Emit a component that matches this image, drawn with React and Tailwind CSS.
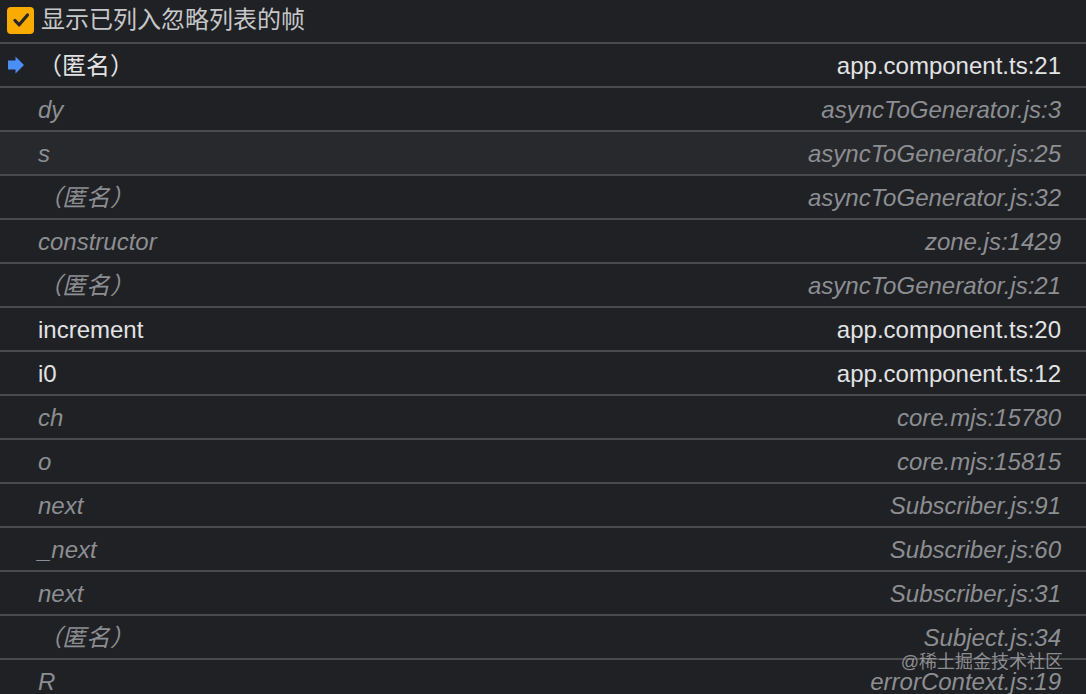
import React from "react";

const rows = [
  { name: "（匿名）", loc: "app.component.ts:21", active: true, current: true },
  { name: "dy", loc: "asyncToGenerator.js:3" },
  { name: "s", loc: "asyncToGenerator.js:25", hover: true },
  { name: "（匿名）", loc: "asyncToGenerator.js:32" },
  { name: "constructor", loc: "zone.js:1429" },
  { name: "（匿名）", loc: "asyncToGenerator.js:21" },
  { name: "increment", loc: "app.component.ts:20", active: true },
  { name: "i0", loc: "app.component.ts:12", active: true },
  { name: "ch", loc: "core.mjs:15780" },
  { name: "o", loc: "core.mjs:15815" },
  { name: "next", loc: "Subscriber.js:91" },
  { name: "_next", loc: "Subscriber.js:60" },
  { name: "next", loc: "Subscriber.js:31" },
  { name: "（匿名）", loc: "Subject.js:34" },
  { name: "R", loc: "errorContext.js:19" },
];

const font = {
  fontFamily: '"Liberation Sans", "Noto Sans CJK SC", sans-serif',
};

export default function App() {
  return (
    <div
      className="relative h-[694px] w-[1086px] overflow-hidden bg-[#202124]"
      style={font}
    >
      <div className="flex h-[44px] items-center border-b-2 border-[#4a4b4f] pl-[7px] pb-[2px]">
        <div className="flex h-[27px] w-[27px] items-center justify-center rounded-[4px] bg-[#f9ab00]">
          <svg width="22" height="22" viewBox="0 0 22 22">
            <path
              d="M5 11.5 L9.2 15.8 L17.5 6"
              fill="none"
              stroke="#262626"
              strokeWidth="3.2"
              strokeLinecap="round"
              strokeLinejoin="round"
            />
          </svg>
        </div>
        <span className="ml-[7px] text-[24px] leading-none text-[#c6c7c9]">
          显示已列入忽略列表的帧
        </span>
      </div>
      {rows.map((r, i) => (
        <div
          key={i}
          className={
            "relative flex h-[44px] items-center justify-between border-b-2 border-[#4a4b4f] pl-[38px] pr-[25px] pt-[2px] text-[24px] " +
            (r.hover ? "bg-[#28292c] " : "") +
            (r.active ? "text-[#e2e3e5]" : "italic text-[#8c8e92]")
          }
        >
          {r.current && (
            <svg
              className="absolute left-[8px] top-[12px]"
              width="16"
              height="18"
              viewBox="0 0 16 18"
            >
              <path d="M0 4.5 H7.5 V0.5 L16 9 L7.5 17.5 V13.5 H0 Z" fill="#4b8ef5" />
            </svg>
          )}
          <span className="leading-none">{r.name}</span>
          <span className="leading-none">{r.loc}</span>
        </div>
      ))}
      <div className="absolute right-[23px] top-[653px] text-[18px] leading-none text-[#a0a1a4]/85">
        @稀土掘金技术社区
      </div>
    </div>
  );
}
